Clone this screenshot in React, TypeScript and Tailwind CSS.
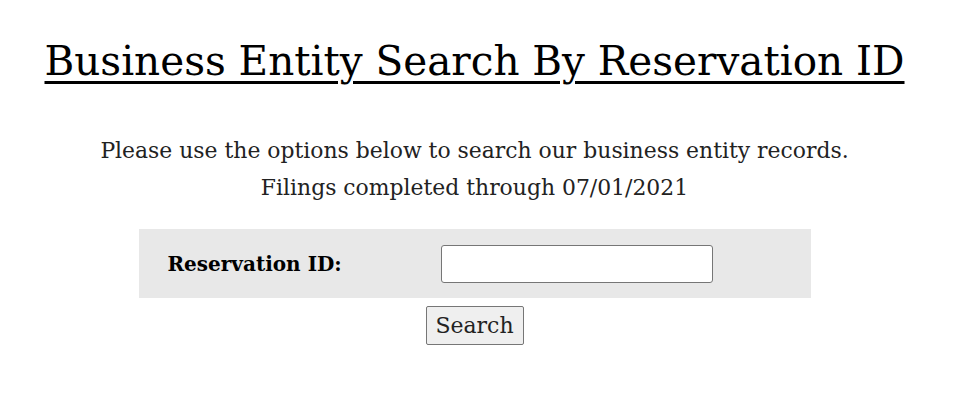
export default function App() {
  return (
    <div className="w-[949px] bg-white text-black" style={{ fontFamily: '"DejaVu Serif", serif' }}>
      <h1 className="pt-[35px] text-center text-[40.5px] leading-[52px] underline decoration-[3px] underline-offset-[6px]">
        Business Entity Search By Reservation ID
      </h1>
      <div className="mt-[45px] text-center text-[21.9px] leading-[37px] text-[#222]">
        <p>Please use the options below to search our business entity records.</p>
        <p>Filings completed through 07/01/2021</p>
      </div>
      <div className="mx-auto mt-[23px] flex h-[69px] w-[672px] items-center bg-[#e8e8e8]">
        <label className="w-[302px] pl-[29px] text-[20px] font-bold">Reservation ID:</label>
        <input
          type="text"
          className="h-[38px] w-[272px] rounded-[3px] border border-[#767676] bg-white px-1"
        />
      </div>
      <div className="mt-[8px] flex justify-center">
        <button className="h-[39px] w-[98px] rounded-[2px] border border-[#767676] bg-[#efefef] text-[22px] text-[#222]">
          Search
        </button>
      </div>
      <div className="h-[55px]" />
    </div>
  );
}
